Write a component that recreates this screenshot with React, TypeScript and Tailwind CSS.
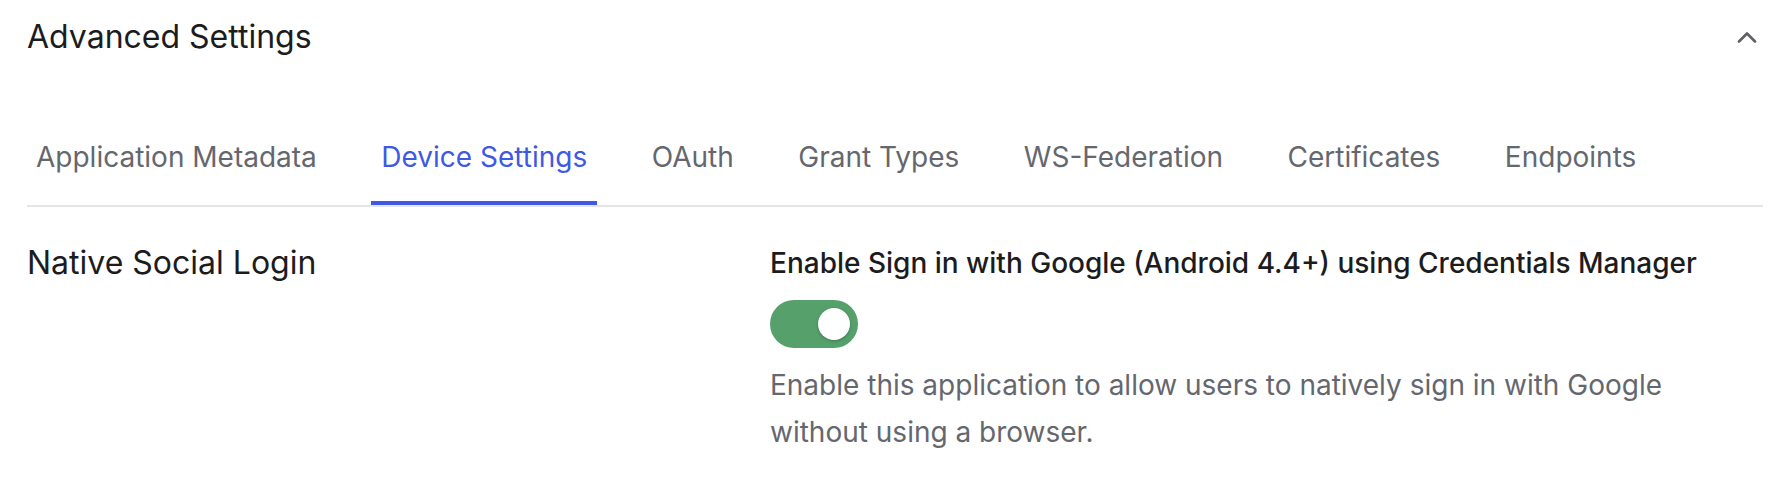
import { useState } from 'react';

const tabs = [
	'Application Metadata',
	'Device Settings',
	'OAuth',
	'Grant Types',
	'WS-Federation',
	'Certificates',
	'Endpoints',
];

export default function App() {
	const [active, setActive] = useState('Device Settings');
	const [open, setOpen] = useState(true);
	const [enabled, setEnabled] = useState(true);

	return (
		<div className="min-h-[494px] bg-white pl-[27px] pr-[29px] pt-[17px] font-['Inter',sans-serif] antialiased">
			<div className="flex h-10 items-center justify-between">
				<h2 className="text-[32px] leading-10 text-[#1c1c1e]">Advanced Settings</h2>
				<button
					aria-label="Collapse"
					onClick={() => setOpen((prev) => !prev)}
					className="mr-[6px] flex text-[#5f6066]"
				>
					<svg width="20" height="12" viewBox="0 0 20 12" fill="none">
						<path
							d={open ? 'M2 10.5 10 2.5l8 8' : 'M2 2.5l8 8 8-8'}
							stroke="currentColor"
							strokeWidth="2.6"
							strokeLinecap="round"
							strokeLinejoin="round"
						/>
					</svg>
				</button>
			</div>

			{open && (
				<>
					<div className="mt-20 flex gap-[44.5px] border-b-2 border-[#e5e5e7]">
						{tabs.map((tab) => (
							<button
								key={tab}
								onClick={() => setActive(tab)}
								className={`border-b-4 px-[10px] pb-6 text-[28px] leading-10 whitespace-nowrap first:-ml-px ${
									active === tab
										? 'border-[#3f59e4] text-[#3f59e4]'
										: 'border-transparent text-[#65676e]'
								}`}
							>
								{tab}
							</button>
						))}
					</div>

					<div className="mt-9 flex">
						<h3 className="w-[743px] shrink-0 text-[32px] leading-10 text-[#1c1c1e]">
							Native Social Login
						</h3>
						<div className="flex flex-col items-start">
							<label className="text-[28px] font-medium leading-10 text-[#1c1c1e]">
								Enable Sign in with Google (Android 4.4+) using Credentials Manager
							</label>
							<button
								role="switch"
								aria-checked={enabled}
								onClick={() => setEnabled((prev) => !prev)}
								className={`mt-[17px] flex h-12 w-[88px] items-center rounded-full px-2 transition-all ${
									enabled ? 'justify-end bg-[#55a06b]' : 'justify-start bg-[#c9cacf]'
								}`}
							>
								<span className="h-8 w-8 rounded-full bg-white shadow-[0_1px_3px_rgba(0,0,0,0.25)]" />
							</button>
							<p className="mt-[14px] max-w-[940px] text-[28px] leading-[47px] text-[#65676e]">
								Enable this application to allow users to natively sign in with Google without
								using a browser.
							</p>
						</div>
					</div>
				</>
			)}
		</div>
	);
}
